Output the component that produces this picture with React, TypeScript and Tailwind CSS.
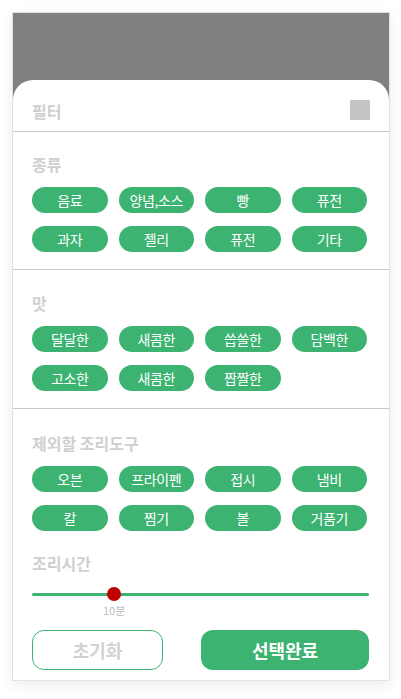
import React from "react";

const GREEN = "bg-[#3cb371]";

const kinds = ["음료", "양념,소스", "빵", "퓨전", "과자", "젤리", "퓨전", "기타"];
const tastes = ["달달한", "새콤한", "씁쓸한", "담백한", "고소한", "새콤한", "짭짤한"];
const tools = ["오븐", "프라이펜", "접시", "냄비", "칼", "찜기", "볼", "거품기"];

function Chips({ items }: { items: string[] }) {
  return (
    <div className="w-[335px] grid grid-cols-4 gap-x-[11px] gap-y-[13px]">
      {items.map((label, i) => (
        <button
          key={i}
          className={`${GREEN} h-[26px] rounded-full text-white text-[14px] leading-none tracking-tight`}
        >
          {label}
        </button>
      ))}
    </div>
  );
}

function Section({
  title,
  items,
  pt,
}: {
  title: string;
  items: string[];
  pt: string;
}) {
  return (
    <section className={`px-[19px] ${pt} pb-[17px] border-b border-[#c8c8c8]`}>
      <h3 className="text-[16px] leading-6 font-bold text-[#cfcfcf]">{title}</h3>
      <div className="mt-[11px]">
        <Chips items={items} />
      </div>
    </section>
  );
}

export default function App() {
  return (
    <div
      className="bg-white min-h-[699px] p-[12px]"
      style={{ fontFamily: '"Noto Sans CJK KR", "Noto Sans", sans-serif' }}
    >
      <div className="w-[378px] border border-[#e2e2e2] bg-[#808080] shadow-[0_4px_14px_rgba(0,0,0,0.08)]">
        <div className="h-[67px]" />
        <div className="bg-white rounded-t-[20px]">
          {/* 헤더 */}
          <div className="h-[52px] flex items-start justify-between px-[19px] pt-[19px] border-b border-[#c8c8c8]">
            <h2 className="text-[16px] font-bold text-[#cfcfcf] leading-6">필터</h2>
            <div className="mt-[1px] w-[20px] h-[20px] bg-[#c4c4c4]" />
          </div>

          <Section title="종류" items={kinds} pt="pt-[20px]" />
          <Section title="맛" items={tastes} pt="pt-[21px]" />

          <section className="px-[19px] pt-[22px] pb-[10px]">
            <h3 className="text-[16px] leading-6 font-bold text-[#cfcfcf]">제외할 조리도구</h3>
            <div className="mt-[11px]">
              <Chips items={tools} />
            </div>

            <h3 className="mt-[20px] text-[16px] leading-6 font-bold text-[#cfcfcf]">조리시간</h3>

            {/* 슬라이더 */}
            <div className="relative mt-[12px] h-[14px] flex items-center">
              <div className="w-[337px] h-[3px] rounded-full bg-[#3cb371]" />
              <div className="absolute left-[75px] top-0 w-[14px] h-[14px] rounded-full bg-[#c00000]" />
            </div>
            <div className="pl-[71px] mt-[2px] text-[11px] leading-[14px] text-[#bdbdbd]">10분</div>

            <div className="mt-[13px] flex items-center justify-between w-[337px]">
              <button className="w-[131px] h-[40px] rounded-[12px] border border-[#3cb371] text-[18px] font-bold text-[#d2d2d2] bg-white">
                초기화
              </button>
              <button className={`${GREEN} w-[168px] h-[40px] rounded-[12px] text-[18px] font-bold text-white`}>
                선택완료
              </button>
            </div>
          </section>
        </div>
      </div>
    </div>
  );
}
